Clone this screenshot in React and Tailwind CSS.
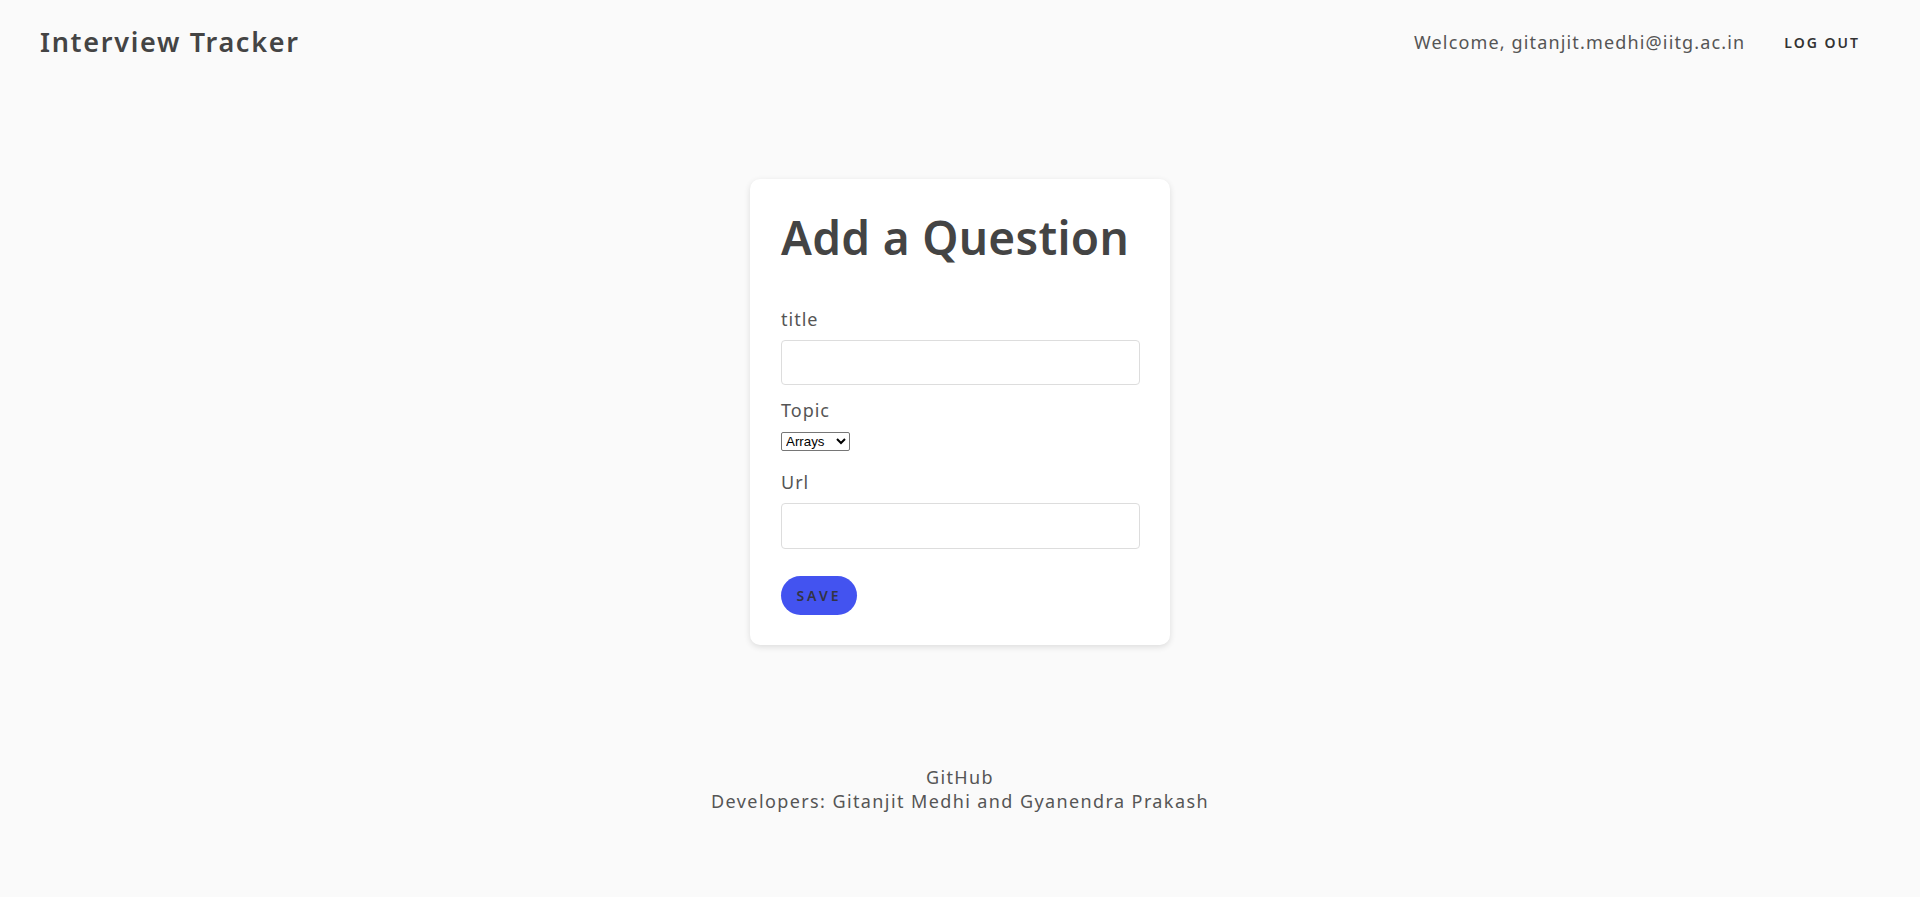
import React from "react";

export default function App() {
  const font = { fontFamily: "'Noto Sans', Lato, sans-serif" };
  return (
    <div className="min-h-[897px] bg-[#fafafa] text-[#444444]" style={font}>
      <header className="flex items-center justify-between h-[84px] pl-[40px] pr-[60px]">
        <div className="text-[27px] font-semibold tracking-[1.7px] text-[#444444]">Interview Tracker</div>
        <div className="flex items-center">
          <span className="text-[18px] text-[#555555] tracking-[1.15px]">Welcome, gitanjit.medhi@iitg.ac.in</span>
          <button className="ml-[39px] text-[14px] font-semibold tracking-[2px] text-[#333333]">LOG OUT</button>
        </div>
      </header>
      <main className="flex justify-center pt-[95px]">
        <div className="w-[420px] bg-white rounded-[10px] shadow-[0_2px_6px_rgba(0,0,0,0.12)] px-[31px] pt-[26px] pb-[30px]">
          <h1 className="text-[46px] font-semibold tracking-[0.3px] text-[#444444] leading-[64px]">Add a Question</h1>
          <div className="mt-[37px]">
            <label className="block text-[18px] text-[#555555] tracking-[1px] leading-[26px]">title</label>
            <input className="mt-[8px] block w-[359px] h-[45px] border border-[#dddddd] rounded-[4px] bg-white" />
          </div>
          <div className="mt-[12px]">
            <label className="block text-[18px] text-[#555555] tracking-[1px] leading-[26px]">Topic</label>
            <select className="mt-[9px] block border border-[#767676] bg-white text-[13.33px] text-black h-[19px] w-[69px] rounded-[2px]" style={{ fontFamily: "Arial, 'Liberation Sans', sans-serif", appearance: "auto" }}>
              <option>Arrays</option>
            </select>
          </div>
          <div className="mt-[18px]">
            <label className="block text-[18px] text-[#555555] tracking-[1px] leading-[26px]">Url</label>
            <input className="mt-[8px] block w-[359px] h-[46px] border border-[#dddddd] rounded-[4px] bg-white" />
          </div>
          <button className="mt-[27px] w-[76px] h-[39px] rounded-full bg-[#4353f0] text-[14px] font-semibold tracking-[3px] text-[#333344]">SAVE</button>
        </div>
      </main>
      <footer className="mt-[120px] text-center text-[18px] text-[#555555] leading-[24px] tracking-[1.4px]">
        <div>GitHub</div>
        <div>Developers: Gitanjit Medhi and Gyanendra Prakash</div>
      </footer>
    </div>
  );
}
